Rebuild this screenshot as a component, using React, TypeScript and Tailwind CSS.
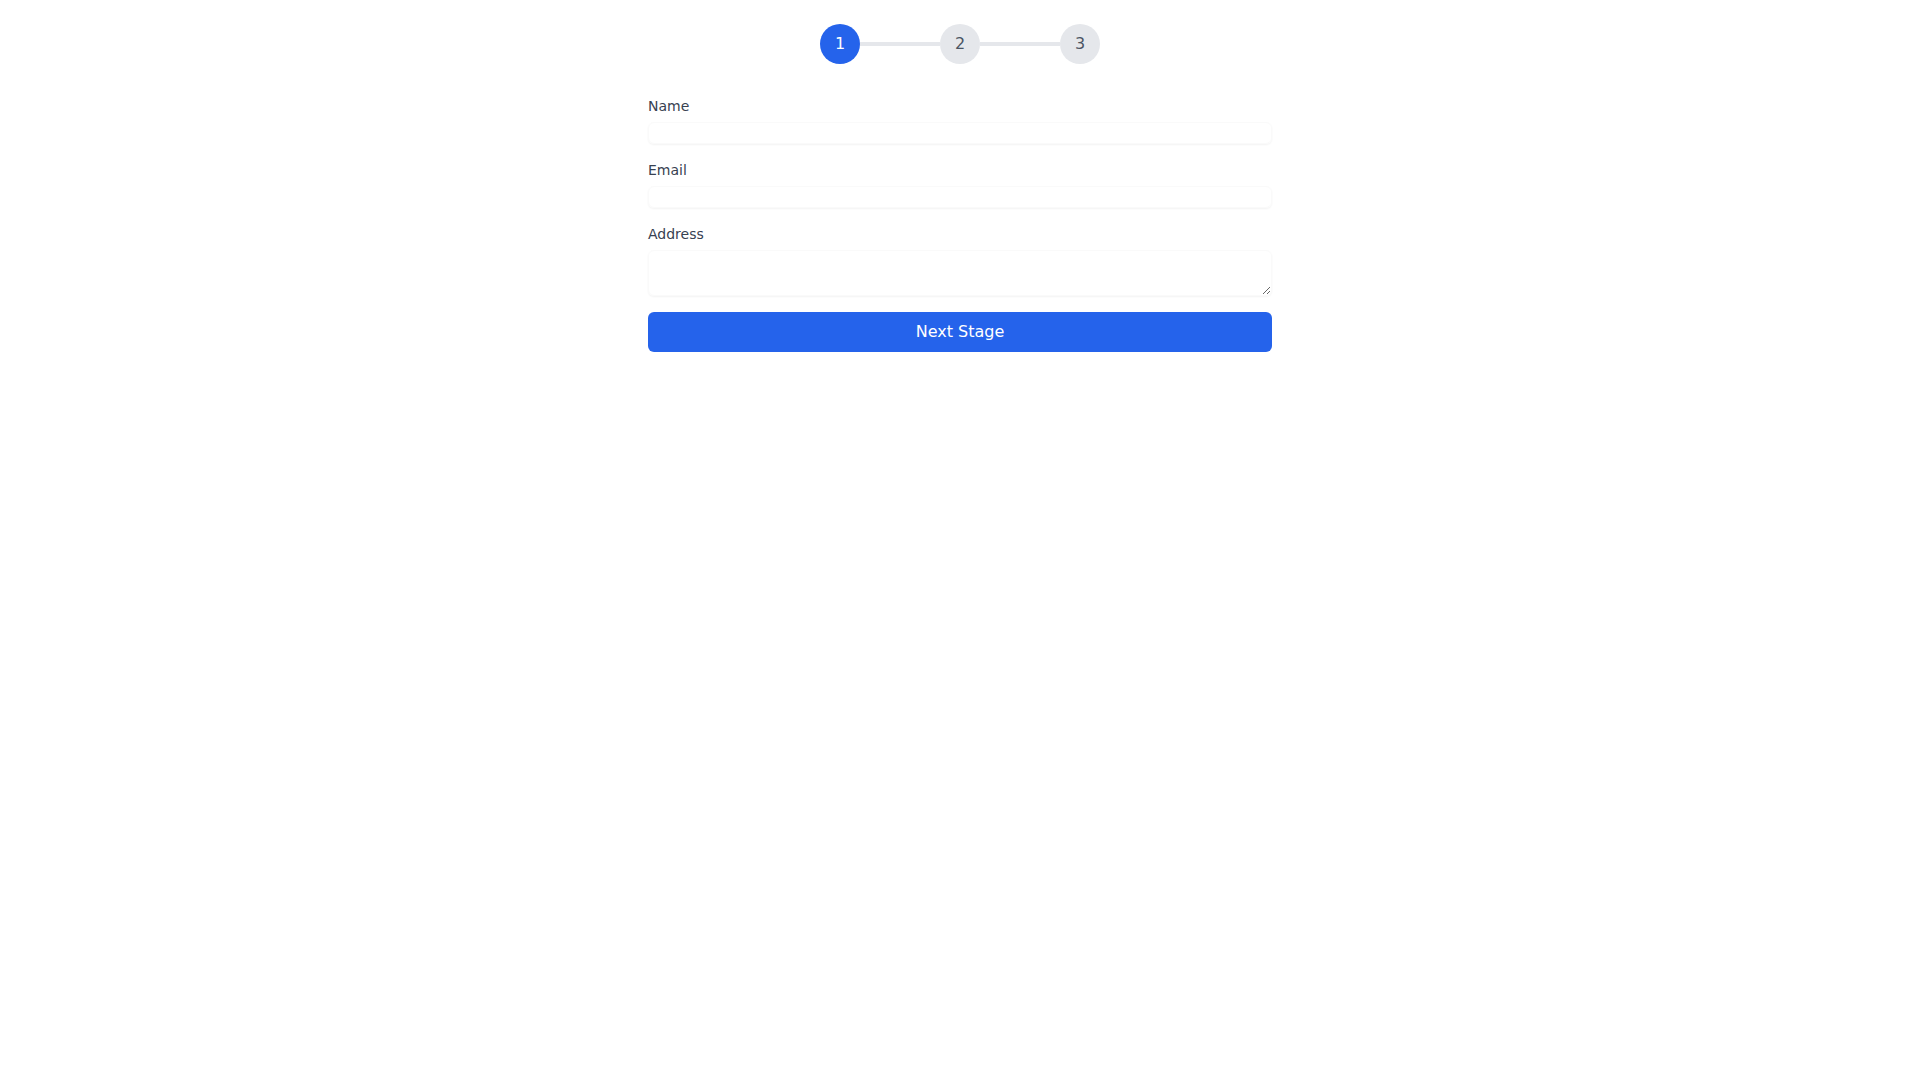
import { useState } from "react";

const steps = [1, 2, 3];

const Stepper = ({ current }: { current: number }) => {
	return (
		<div className="flex items-center justify-center pt-6">
			{steps.map((step, i) => (
				<div key={step} className="flex items-center">
					<div
						className={`w-10 h-10 rounded-full flex items-center justify-center text-base ${
							step === current ? "bg-[#2563eb] text-white" : "bg-[#e5e7eb] text-[#4b5563]"
						}`}>
						{step}
					</div>
					{i < steps.length - 1 && <div className="w-20 h-1 bg-[#e5e7eb]" />}
				</div>
			))}
		</div>
	);
};

const fieldClass =
	"mt-[6px] block w-full text-sm rounded-md border border-[#fafafa] shadow-[0_1px_2px_0_rgba(0,0,0,0.05)] outline-none";

const App = () => {
	const [stage, setStage] = useState(1);
	return (
		<div className="min-h-screen bg-white font-['DejaVu_Sans',sans-serif]">
			<Stepper current={stage} />
			<form
				className="w-[624px] mx-auto mt-8 space-y-4"
				onSubmit={(e) => {
					e.preventDefault();
					setStage(stage < 3 ? stage + 1 : 1);
				}}>
				<div>
					<label className="block text-sm text-[#374151]">Name</label>
					<input type="text" className={`${fieldClass} h-[22px]`} />
				</div>
				<div>
					<label className="block text-sm text-[#374151]">Email</label>
					<input type="email" className={`${fieldClass} h-[22px]`} />
				</div>
				<div>
					<label className="block text-sm text-[#374151]">Address</label>
					<textarea className={`${fieldClass} h-[46px]`} />
				</div>
				<button
					type="submit"
					className="w-full py-2 bg-[#2563eb] text-white text-base rounded-md">
					Next Stage
				</button>
			</form>
		</div>
	);
};

export default App;
